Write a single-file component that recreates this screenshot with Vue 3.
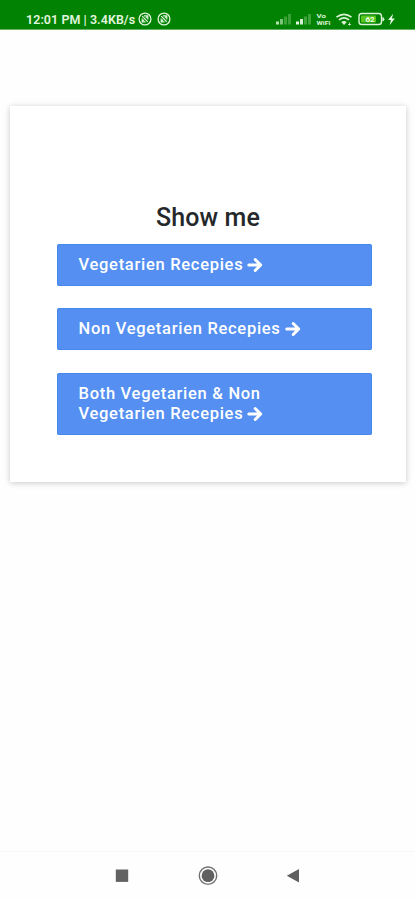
<script setup>
const choices = [
  { id: 'veg', lines: ['Vegetarien Recepies'] },
  { id: 'nonveg', lines: ['Non Vegetarien Recepies'] },
  { id: 'both', lines: ['Both Vegetarien & Non', 'Vegetarien Recepies'] },
]
</script>

<template>
  <div class="screen">
    <header class="status">
      <div class="status-left">
        <span class="clock">12:01 PM | 3.4KB/s</span>
        <svg v-for="n in 2" :key="n" class="badge" viewBox="0 0 14 14">
          <circle cx="7" cy="7" r="5.9" fill="none" stroke="#dcf3d8" stroke-width="1.3" />
          <path d="M4 9.8 6.1 7.7M7.9 5.9 10 4M4.2 4.2l5.6 5.6M6 3.9h3.8v3.7M4.2 6.4v3.4h3.3" fill="none" stroke="#dcf3d8" stroke-width="1.2" />
        </svg>
      </div>
      <svg class="status-right" width="124" height="18" viewBox="0 0 124 18">
        <g fill="#4dab48">
          <rect x="1" y="11.500" width="3" height="3" fill="#b5e0b0" />
          <rect x="5" y="9" width="3" height="5.500" fill="#7cc477" />
          <rect x="9" y="6.500" width="3" height="8" opacity=".75" />
          <rect x="13" y="4" width="3" height="10.500" opacity=".75" />
        </g>
        <g fill="#4dab48">
          <rect x="21" y="11.500" width="3" height="3" fill="#e2f6df" />
          <rect x="25" y="9" width="3" height="5.500" fill="#d3efcf" />
          <rect x="29" y="6.500" width="3" height="8" opacity=".8" />
          <rect x="33" y="4" width="3" height="10.500" opacity=".8" />
        </g>
        <g class="tiny" fill="#dcf3d8">
          <text x="41.500" y="7.500" textLength="9.500" lengthAdjust="spacingAndGlyphs">Vo</text>
          <text x="41.500" y="15" textLength="14" lengthAdjust="spacingAndGlyphs">WiFi</text>
        </g>
        <g fill="none" stroke="#dcf3d8" stroke-width="1.700">
          <path d="M61.500 7.200q7.500-5.800 15 0M64 9.900q5-4 10 0" />
          <path d="m66.200 12 2.800 3 2.800-3q-2.800-1.800-5.600 0z" fill="#dcf3d8" stroke="none" />
          <path d="M73 14.500h3M74.500 12.500v3" stroke-width="1" opacity=".8" />
        </g>
        <rect x="84" y="3.500" width="22.500" height="11" rx="2.800" fill="none" stroke="#dcf3d8" stroke-width="1.400" />
        <rect x="86" y="5.500" width="15" height="7" rx="1" fill="#57c51c" />
        <path d="M107.400 7v4.500q2-.3 2-2.250t-2-2.250z" fill="#dcf3d8" />
        <text class="percent" x="90.500" y="12">62</text>
        <path d="M118.200 3.800 113 10h2.900l-1.300 5.200 5.200-6.700h-2.900z" fill="#e6f8e3" />
      </svg>
    </header>

    <main class="content">
      <section class="card">
        <h1>Show me</h1>
        <div class="choices">
          <button v-for="choice in choices" :key="choice.id" type="button">
            <span v-for="(line, i) in choice.lines" :key="line" class="line">
              {{ line }}
              <svg v-if="i === choice.lines.length - 1" class="arrow" viewBox="0 0 16 16">
                <path d="M1.800 8h11M8.200 2.500 13.700 8l-5.500 5.500" fill="none" stroke="#fff" stroke-width="3" stroke-linecap="round" stroke-linejoin="round" />
              </svg>
            </span>
          </button>
        </div>
      </section>
    </main>

    <nav class="navbar">
      <svg viewBox="0 0 20 20"><rect x="3.800" y="3.500" width="12.400" height="12.400" fill="#626262" /></svg>
      <svg viewBox="0 0 20 20">
        <circle cx="10" cy="9.700" r="8.700" fill="none" stroke="#707070" stroke-width="1.400" />
        <circle cx="10" cy="9.700" r="6.400" fill="#606060" />
      </svg>
      <svg viewBox="0 0 20 20"><path d="M15 3v13.500L2.800 9.750z" fill="#606060" /></svg>
    </nav>
  </div>
</template>

<style>
body {
  background: #fefefe;
}
</style>

<style scoped>
.screen {
  display: flex;
  flex-direction: column;
  height: 900px;
  background: #fefefe;
  font-family: Roboto, "Liberation Sans", sans-serif;
}
.status {
  box-sizing: border-box;
  display: flex;
  justify-content: space-between;
  height: 30px;
  padding: 10px 16px 0 26px;
  background: #028202;
  border-bottom: 1px solid #65b065;
}
.status-left {
  display: flex;
  align-items: center;
  gap: 5px;
  height: 18px;
}
.clock {
  width: 107px;
  color: #e2f6df;
  font-size: 12.500px;
  font-weight: 600;
  letter-spacing: 0.05px;
  white-space: nowrap;
}
.badge {
  width: 14px;
  height: 14px;
}
.tiny {
  font-size: 6.200px;
  font-weight: 700;
}
.percent {
  fill: #f0ffe9;
  font-size: 8px;
  font-weight: 700;
}
.content {
  flex: 1;
  padding: 76px 9px 0 10px;
}
.card {
  box-sizing: border-box;
  height: 376px;
  padding: 97px 34px 0 47px;
  background: #fff;
  box-shadow: 0 1px 6px rgba(0, 0, 0, 0.22);
}
h1 {
  margin: 0 13px 11px 0;
  color: #25282b;
  font-size: 25px;
  font-weight: 500;
  line-height: 30px;
  letter-spacing: 0.1px;
  text-align: center;
}
.choices {
  display: flex;
  flex-direction: column;
  gap: 22.400px;
}
button {
  display: block;
  padding: 11px 21.500px;
  border: 0;
  border-radius: 2.500px;
  background: #548ff1;
  box-shadow: inset 0 0 0 1px #4688ed;
  color: #fff;
  font: 500 16.500px/20px Roboto, "Liberation Sans", sans-serif;
  letter-spacing: 0.71px;
  text-align: left;
}
.line {
  display: flex;
  align-items: center;
  gap: 4px;
  white-space: nowrap;
}
.arrow {
  width: 16px;
  height: 16px;
}
.navbar {
  box-sizing: border-box;
  display: flex;
  justify-content: center;
  align-items: center;
  gap: 66px;
  height: 49px;
  border-top: 1px solid #f8f8f8;
}
.navbar svg {
  width: 20px;
  height: 20px;
}
</style>
